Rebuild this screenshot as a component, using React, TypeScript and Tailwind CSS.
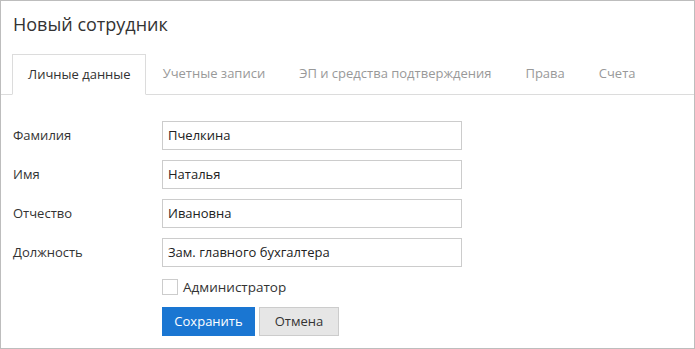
import React from "react";

const font = { fontFamily: '"Open Sans", "Noto Sans", sans-serif' };

export default function App() {
  const tabs = ["Учетные записи", "ЭП и средства подтверждения", "Права", "Счета"];
  const fields: [string, string][] = [
    ["Фамилия", "Пчелкина"],
    ["Имя", "Наталья"],
    ["Отчество", "Ивановна"],
    ["Должность", "Зам. главного бухгалтера"],
  ];
  return (
    <div
      className="w-[695px] h-[349px] border border-[#bdbdbd] bg-white text-[#333] overflow-hidden"
      style={font}
    >
      <div className="pl-[12px] pt-[11px] h-[53px] text-[18px] leading-[24px] text-[#333]">
        Новый сотрудник
      </div>
      <div className="flex pl-[11px] border-b border-[#dcdcdc] h-[41px]">
        <div className="h-[41px] pl-[15px] pr-[14px] border border-[#dcdcdc] border-b-white bg-white flex items-center text-[13px] text-[#333]">
          Личные данные
        </div>
        {tabs.map((t) => (
          <div
            key={t}
            className="h-[40px] px-[17px] flex items-center text-[13px] text-[#999]"
          >
            {t}
          </div>
        ))}
      </div>
      <div className="pl-[12px] pt-[26px]">
        <div className="grid grid-cols-[149px_300px] gap-y-[10px] items-center">
          {fields.map(([l, v]) => (
            <React.Fragment key={l}>
              <div className="text-[13px] text-[#333]">{l}</div>
              <div className="h-[29px] border border-[#cccccc] flex items-center px-[5px] text-[13px] text-[#222]">
                {v}
              </div>
            </React.Fragment>
          ))}
        </div>
        <div className="ml-[149px] mt-[12px] flex items-center gap-[5px] h-[16px]">
          <div className="w-[16px] h-[16px] border border-[#cccccc] bg-white" />
          <span className="text-[13.5px] text-[#333]">Администратор</span>
        </div>
        <div className="ml-[149px] mt-[12px] flex gap-[4px]">
          <button className="w-[93px] h-[29px] bg-[#1a76d2] text-white text-[13px]">
            Сохранить
          </button>
          <button className="w-[80px] h-[29px] bg-[#e6e6e6] border border-[#cccccc] text-[#333] text-[13px]">
            Отмена
          </button>
        </div>
      </div>
    </div>
  );
}
